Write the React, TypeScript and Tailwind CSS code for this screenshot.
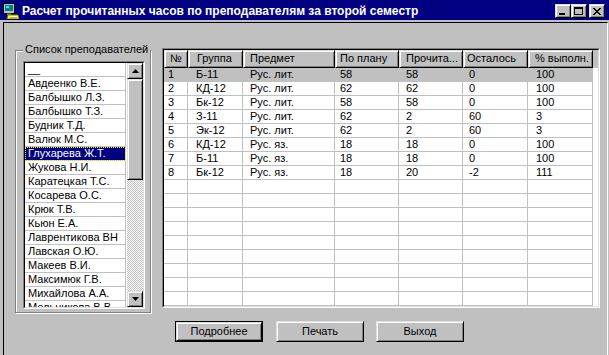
import React from 'react';

const NAMES = [
  '__',
  'Авдеенко В.Е.',
  'Балбышко Л.З.',
  'Балбышко Т.З.',
  'Будник Т.Д.',
  'Валюк М.С.',
  'Глухарева Ж.Т.',
  'Жукова Н.И.',
  'Каратецкая Т.С.',
  'Косарева О.С.',
  'Крюк Т.В.',
  'Кьюн Е.А.',
  'Лаврентикова ВН',
  'Лавская О.Ю.',
  'Макеев В.И.',
  'Максимюк Г.В.',
  'Михайлова А.А.',
  'Мельникова В.В.',
];

const COLUMNS = [
  { title: '№', w: 'w-[24px]', pad: 'pl-[4px]', hpad: 'pl-[5px]' },
  { title: 'Группа', w: 'w-[55px]', pad: 'pl-[8px]', hpad: 'pl-[8px]' },
  { title: 'Предмет', w: 'w-[92px]', pad: 'pl-[7px]', hpad: 'pl-[6px]' },
  { title: 'По плану', w: 'w-[64px]', pad: 'pl-[5px]', hpad: 'pl-[4px]' },
  { title: 'Прочита...', w: 'w-[64px]', pad: 'pl-[7px]', hpad: 'pl-[6px]' },
  { title: 'Осталось', w: 'w-[65px]', pad: 'pl-[6px]', hpad: 'pl-[3px]' },
  { title: '% выполн.', w: 'w-[65px]', pad: 'pl-[8px]', hpad: 'pl-[6px]' },
];

const ROWS = [
  ['1', 'Б-11', 'Рус. лит.', '58', '58', '0', '100'],
  ['2', 'КД-12', 'Рус. лит.', '62', '62', '0', '100'],
  ['3', 'Бк-12', 'Рус. лит.', '58', '58', '0', '100'],
  ['4', 'З-11', 'Рус. лит.', '62', '2', '60', '3'],
  ['5', 'Эк-12', 'Рус. лит.', '62', '2', '60', '3'],
  ['6', 'КД-12', 'Рус. яз.', '18', '18', '0', '100'],
  ['7', 'Б-11', 'Рус. яз.', '18', '18', '0', '100'],
  ['8', 'Бк-12', 'Рус. яз.', '18', '20', '-2', '111'],
];

const EMPTY_ROWS = 17 - ROWS.length;

const raised =
  'border border-t-[#dfdfdf] border-l-[#dfdfdf] border-r-black border-b-black bg-[#c0c0c0] shadow-[inset_1px_1px_0_#fff,inset_-1px_-1px_0_#808080]';

function Sunken({ className, children }: { className: string; children: React.ReactNode }) {
  return (
    <div className={`border border-t-[#808080] border-l-[#808080] border-r-white border-b-white ${className}`}>
      <div className="h-full w-full border border-t-black border-l-black border-r-[#dfdfdf] border-b-[#dfdfdf]">
        {children}
      </div>
    </div>
  );
}

function AppIcon() {
  return (
    <svg width="16" height="16" viewBox="0 0 16 16" className="shrink-0">
      <rect x="0.5" y="0.5" width="11" height="10" fill="#c0c0c0" stroke="#000" />
      <rect x="2" y="2" width="8" height="6" fill="#008080" />
      <rect x="3" y="3" width="3" height="2" fill="#00ffff" />
      <rect x="4" y="10.5" width="4" height="1.5" fill="#808080" />
      <polygon points="5,12 15,12 16,16 4,16" fill="#ffff00" stroke="#808000" strokeWidth="0.8" />
      <rect x="7" y="13" width="7" height="1" fill="#ffffff" />
      <rect x="7" y="14.5" width="7" height="0.8" fill="#808000" />
    </svg>
  );
}

function TitleButton({ kind }: { kind: 'min' | 'max' | 'close' }) {
  return (
    <div className={`${raised} flex h-[14px] w-[16px] items-center justify-center`}>
      <svg width="10" height="9" viewBox="0 0 10 9">
        {kind === 'min' && <rect x="1" y="6" width="6" height="2" fill="#000" />}
        {kind === 'max' && (
          <>
            <rect x="0.5" y="0.5" width="8" height="7" fill="none" stroke="#000" />
            <rect x="0" y="0" width="9" height="2" fill="#000" />
          </>
        )}
        {kind === 'close' && (
          <path d="M1 1 L8 8 M2 1 L9 8 M8 1 L1 8 M9 1 L2 8" stroke="#000" strokeWidth="1" />
        )}
      </svg>
    </div>
  );
}

function Arrow({ up }: { up?: boolean }) {
  return (
    <div className={`${raised} flex h-[16px] w-[16px] items-center justify-center`}>
      <svg width="7" height="4" viewBox="0 0 7 4">
        {up ? <polygon points="3.5,0 7,4 0,4" fill="#000" /> : <polygon points="0,0 7,0 3.5,4" fill="#000" />}
      </svg>
    </div>
  );
}

function TeacherList() {
  return (
    <Sunken className="ml-[7px] mt-[10px] h-[248px] w-[122px]">
      <div className="flex h-full">
        <div className="h-full w-[102px] overflow-hidden bg-white">
          {NAMES.map((name, i) => {
            const selected = i === 6;
            return (
              <div
                key={name}
                className={`h-[14px] w-[101px] border-b border-r border-[#c0c0c0] pl-[3px] text-[11px] leading-[13px] whitespace-nowrap ${
                  selected
                    ? 'bg-[#000080] text-white outline-1 -outline-offset-1 outline-dotted outline-[#ffff00]'
                    : 'text-black'
                }`}
              >
                {name}
              </div>
            );
          })}
        </div>
        <div className="flex w-[16px] flex-col">
          <Arrow up />
          <div className={`${raised} h-[101px]`} />
          <div className="flex-1 [background:repeating-conic-gradient(#c0c0c0_0%_25%,#ffffff_0%_50%)_0_0/2px_2px]" />
          <Arrow />
        </div>
      </div>
    </Sunken>
  );
}

function HoursGrid() {
  return (
    <Sunken className="h-[260px] w-[438px]">
      <div className="flex h-full flex-col bg-white">
        <div className="flex h-[18px] bg-[#c0c0c0]">
          {COLUMNS.map((c) => (
            <div key={c.title} className={`${raised} ${c.w} ${c.hpad} text-[11px] leading-[15px] whitespace-nowrap`}>
              {c.title}
            </div>
          ))}
          <div className="flex-1" />
        </div>
        {ROWS.map((row, r) => (
          <div key={r} className="flex h-[14px]">
            {row.map((cell, i) => (
              <div
                key={i}
                className={`${COLUMNS[i].w} ${COLUMNS[i].pad} border-b border-r border-[#c0c0c0] text-[11px] leading-[13px] whitespace-nowrap ${
                  r === 0 ? 'bg-[#c0c0c0]' : ''
                }`}
              >
                {cell}
              </div>
            ))}
            <div className="flex-1" />
          </div>
        ))}
        {Array.from({ length: EMPTY_ROWS }).map((_, r) => (
          <div key={`e${r}`} className="flex h-[14px]">
            {COLUMNS.map((c) => (
              <div key={c.title} className={`${c.w} border-b border-r border-[#c0c0c0]`} />
            ))}
            <div className="flex-1" />
          </div>
        ))}
      </div>
    </Sunken>
  );
}

function DialogButton({ label, isDefault }: { label: string; isDefault?: boolean }) {
  const inner = (
    <div className={`${raised} flex h-full w-full items-center justify-center text-[11px]`}>{label}</div>
  );
  return isDefault ? (
    <div className="h-[21px] w-[88px] border border-black">{inner}</div>
  ) : (
    <div className="h-[21px] w-[88px]">{inner}</div>
  );
}

export default function App() {
  return (
    <div className="h-[355px] w-[609px] overflow-hidden bg-[#c0c0c0] font-['Liberation_Sans',Arial,sans-serif] text-black">
      <div className="flex h-[20px] items-center bg-[#000080] pl-[3px] pr-[4px] pt-[2px]">
        <AppIcon />
        <div className="ml-[3px] text-[12px] font-bold leading-[16px] whitespace-nowrap text-white">
          Расчет прочитанных часов по преподавателям за второй семестр
        </div>
        <div className="flex-1" />
        <TitleButton kind="min" />
        <TitleButton kind="max" />
        <div className="w-[2px]" />
        <TitleButton kind="close" />
      </div>

      <div className="ml-[3px] mt-[2px] h-[340px] w-[605px] border-l border-t border-r border-l-black border-t-black border-r-white">
        <div className="flex items-start pl-[11px] pt-[25px]">
          <div className="relative mt-[2px] h-[263px] w-[136px] border border-[#808080] shadow-[1px_1px_0_#fff,inset_1px_1px_0_#fff]">
            <div className="absolute -top-[9px] left-[7px] bg-[#c0c0c0] px-[2px] text-[11px] leading-[14px] whitespace-nowrap">
              Список преподавателей
            </div>
            <TeacherList />
          </div>
          <div className="ml-[11px]">
            <HoursGrid />
          </div>
        </div>

        <div className="mt-[8px] flex pl-[171px]">
          <DialogButton label="Подробнее" isDefault />
          <div className="w-[13px]" />
          <DialogButton label="Печать" />
          <div className="w-[12px]" />
          <DialogButton label="Выход" />
        </div>
      </div>
    </div>
  );
}
